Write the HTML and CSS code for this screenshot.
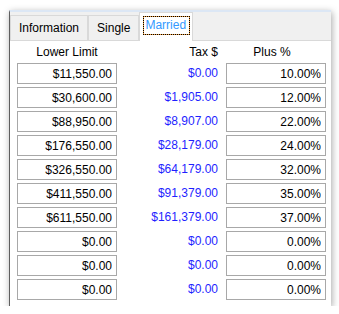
FILE: index.html
```html
<!DOCTYPE html>
<html>
<head>
  <title>Tax Brackets</title>
  <link rel="stylesheet" href="styles.css">
</head>
<body>

  <div class="window">
    <div class="tab-strip">
      <div class="tab">Information</div>
      <div class="tab">Single</div>
      <div class="tab tab-active"><span class="focus">Married</span></div>
    </div>

    <div class="bracket-table">
      <div class="head head-limit">Lower Limit</div>
      <div class="head head-tax">Tax $</div>
      <div class="head head-plus">Plus %</div>

      <input class="field" type="text" value="$11,550.00" readonly>
      <div class="tax">$0.00</div>
      <input class="field" type="text" value="10.00%" readonly>

      <input class="field" type="text" value="$30,600.00" readonly>
      <div class="tax">$1,905.00</div>
      <input class="field" type="text" value="12.00%" readonly>

      <input class="field" type="text" value="$88,950.00" readonly>
      <div class="tax">$8,907.00</div>
      <input class="field" type="text" value="22.00%" readonly>

      <input class="field" type="text" value="$176,550.00" readonly>
      <div class="tax">$28,179.00</div>
      <input class="field" type="text" value="24.00%" readonly>

      <input class="field" type="text" value="$326,550.00" readonly>
      <div class="tax">$64,179.00</div>
      <input class="field" type="text" value="32.00%" readonly>

      <input class="field" type="text" value="$411,550.00" readonly>
      <div class="tax">$91,379.00</div>
      <input class="field" type="text" value="35.00%" readonly>

      <input class="field" type="text" value="$611,550.00" readonly>
      <div class="tax">$161,379.00</div>
      <input class="field" type="text" value="37.00%" readonly>

      <input class="field" type="text" value="$0.00" readonly>
      <div class="tax">$0.00</div>
      <input class="field" type="text" value="0.00%" readonly>

      <input class="field" type="text" value="$0.00" readonly>
      <div class="tax">$0.00</div>
      <input class="field" type="text" value="0.00%" readonly>

      <input class="field" type="text" value="$0.00" readonly>
      <div class="tax">$0.00</div>
      <input class="field" type="text" value="0.00%" readonly>
    </div>
  </div>

</body>
</html>
```

FILE: styles.css
```css
body {
    margin: 0;
    padding: 0;
    background-color: #ffffff;
    font-family: 'Liberation Sans', Arial, sans-serif;
    font-size: 12px;
    color: #000000;
}

.window {
    width: 322px;
    height: 296px;
    margin: 10px 0 0 9px;
    box-sizing: border-box;
    border-left: 1px solid #5f5f5f;
    border-top: 2px solid #dce7f5;
    background-color: #ffffff;
    box-shadow: 1px 2px 7px rgba(0, 0, 0, 0.35);
}

.tab-strip {
    display: flex;
    align-items: flex-end;
    height: 28px;
    background-color: #f0f0f0;
    border-bottom: 1px solid #d9d9d9;
}

.tab {
    height: 25px;
    line-height: 24px;
    padding: 0 8px;
    border: 1px solid #d9d9d9;
    border-bottom: none;
    background-color: #f0f0f0;
    box-sizing: border-box;
}

.tab-active {
    height: 29px;
    margin-bottom: -1px;
    padding: 3px 2px 0 3px;
    background-color: #ffffff;
    color: #3399ff;
    line-height: normal;
}

.focus {
    display: block;
    height: 19px;
    line-height: 17px;
    padding: 0 3px 0 1px;
    box-sizing: border-box;
    border: 1px dotted #000000;
    background: linear-gradient(#ffffff, #ffffff) padding-box, #f0a040 border-box;
}

.bracket-table {
    display: grid;
    grid-template-columns: 100px 101px 100px;
    grid-template-rows: 18px;
    grid-auto-rows: 21px;
    row-gap: 3px;
    padding: 1px 0 0 7px;
}

.bracket-table > :nth-child(3n) {
    margin-left: 8px;
}

.head {
    line-height: 20px;
}

.head-limit,
.head-plus {
    text-align: center;
}

.head-tax {
    text-align: right;
}

.field {
    width: 100px;
    height: 21px;
    margin: 0;
    padding: 0 4px;
    box-sizing: border-box;
    border: 1px solid #a8a8a8;
    background-color: #ffffff;
    font-family: inherit;
    font-size: 12px;
    color: #000000;
    text-align: right;
    outline: none;
}

.tax {
    line-height: 21px;
    text-align: right;
    color: #1f1fff;
}
```
